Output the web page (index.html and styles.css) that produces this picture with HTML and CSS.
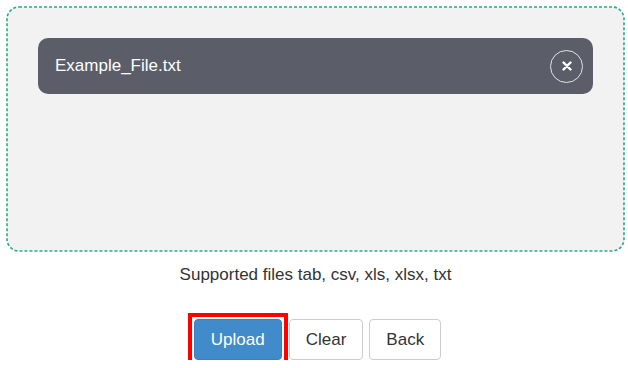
FILE: index.html
```html
<!DOCTYPE html>
<html lang="en">
<head>
    <meta charset="UTF-8">
    <title>File upload</title>
    <link rel="stylesheet" href="styles.css">
</head>
<body>
    <div class="uploader">
        <div class="dropzone">
            <!-- dashed frame, drawn as svg to get short dashes -->
            <svg class="dropzone-frame" width="100%" height="100%">
                <rect x="0" y="0" width="100%" height="100%" rx="12" ry="12"
                      fill="none" stroke="#2aaa8a" stroke-width="1.6" stroke-dasharray="3 2"/>
            </svg>
            <div class="file-item">
                <span class="file-name">Example_File.txt</span>
                <button class="remove-btn" title="Remove">
                    <svg width="10" height="10" viewBox="0 0 10 10">
                        <path d="M1.5 1.5 L8.5 8.5 M8.5 1.5 L1.5 8.5" stroke="#fff" stroke-width="2.4" stroke-linecap="round"/>
                    </svg>
                </button>
            </div>
        </div>

        <p class="hint">Supported files tab, csv, xls, xlsx, txt</p>

        <div class="actions">
            <button class="btn btn-primary btn-focus">Upload</button>
            <button class="btn">Clear</button>
            <button class="btn">Back</button>
        </div>
    </div>
</body>
</html>
```

FILE: styles.css
```css
* { box-sizing: border-box; }

body {
    font-family: 'Liberation Sans', Arial, sans-serif;
    margin: 0;
    padding: 7px 4px 0 7px;
    color: #333;
    background: #fff;
}

.dropzone {
    position: relative;
    height: 244px;
    padding: 31px 31px;
    background: #f2f2f2;
    border-radius: 12px;
}

.dropzone-frame {
    position: absolute;
    top: 0;
    left: 0;
    overflow: visible;
    pointer-events: none;
}

.file-item {
    display: flex;
    justify-content: space-between;
    align-items: center;
    height: 56px;
    padding: 0 10px 0 17px;
    background: #5b5e69;
    border-radius: 10px;
    color: #fff;
}

.file-name {
    font-size: 17px;
}

.remove-btn {
    display: flex;
    align-items: center;
    justify-content: center;
    width: 33px;
    height: 33px;
    padding: 0;
    background: transparent;
    border: 1.5px solid #e4e4e6;
    border-radius: 50%;
    cursor: pointer;
}

.hint {
    margin: 14px 0 0;
    text-align: center;
    font-size: 17px;
    line-height: 20px;
}

.actions {
    display: flex;
    justify-content: center;
    gap: 6px;
    margin-top: 34px;
    padding-left: 4px;
}

.btn {
    height: 41px;
    padding: 0 16px;
    font-family: inherit;
    font-size: 17px;
    color: #333;
    background: #fff;
    border: 1px solid #ccc;
    border-radius: 4px;
    cursor: pointer;
}

.btn-primary {
    color: #fff;
    background: #428bca;
    border-color: #3b80bd;
}

/* red highlight frame around the focused button */
.btn-focus {
    position: relative;
    margin-right: 1px;
}

.btn-focus::after {
    content: "";
    position: absolute;
    top: -7px;
    left: -7px;
    right: -7px;
    bottom: -7px;
    border: 4px solid #f00;
}
```
